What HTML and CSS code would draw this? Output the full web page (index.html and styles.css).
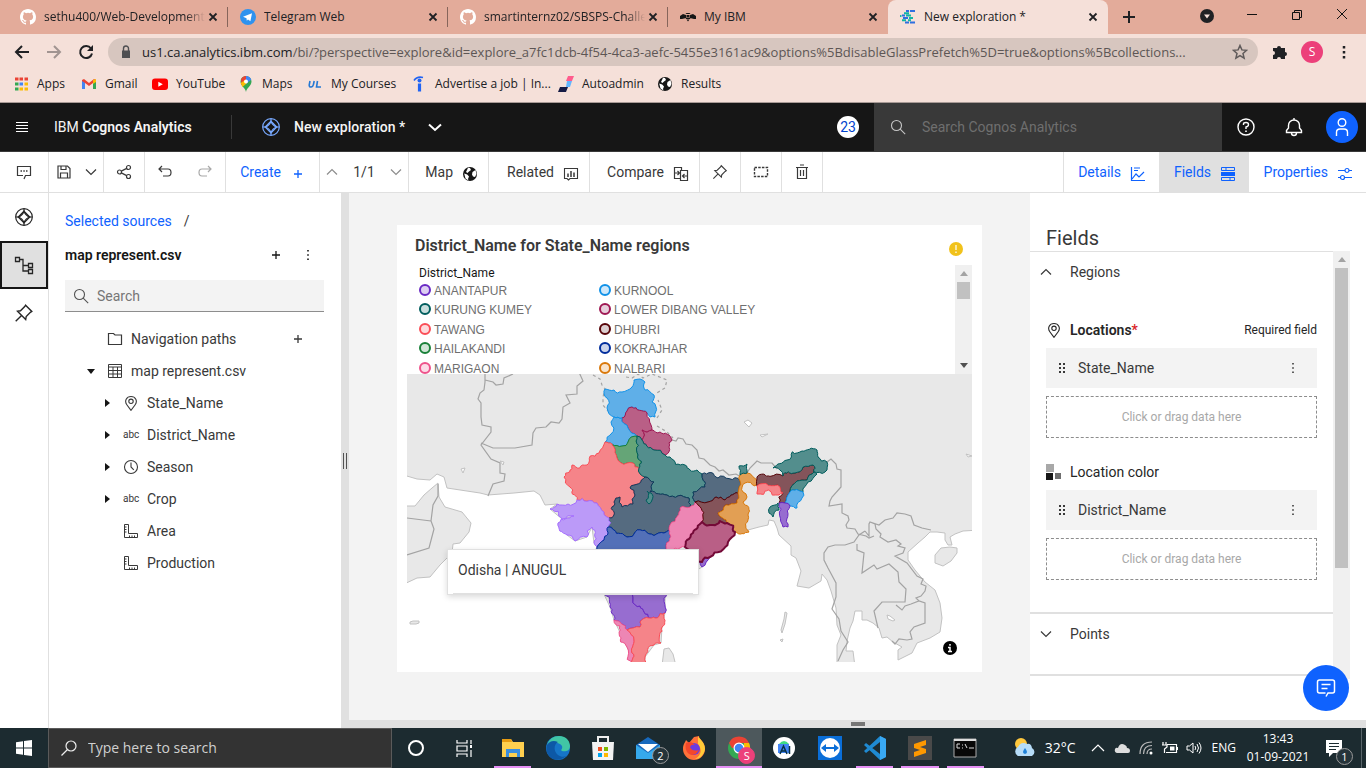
FILE: index.html
```html
<!DOCTYPE html>
<html lang="en">
<head>
<meta charset="utf-8">
<title>New exploration *</title>
<link rel="stylesheet" href="styles.css">
<script src="map.js" defer></script>
</head>
<body>
<svg class="defs" aria-hidden="true">
  <symbol id="x" viewBox="0 0 16 16"><path d="M4.5 4.5l7 7M11.5 4.5l-7 7" stroke="currentColor" stroke-width="1.8"/></symbol>
  <symbol id="github" viewBox="0 0 16 16"><path fill="#fff" d="M8 0C3.58 0 0 3.58 0 8c0 3.54 2.29 6.53 5.47 7.59.4.07.55-.17.55-.38 0-.19-.01-.82-.01-1.49-2.01.37-2.53-.49-2.69-.94-.09-.23-.48-.94-.82-1.13-.28-.15-.68-.52-.01-.53.63-.01 1.08.58 1.23.82.72 1.21 1.87.87 2.33.66.07-.52.28-.87.51-1.07-1.78-.2-3.64-.89-3.64-3.95 0-.87.31-1.59.82-2.15-.08-.2-.36-1.02.08-2.12 0 0 .67-.21 2.2.82a7.4 7.4 0 0 1 4 0c1.53-1.04 2.2-.82 2.2-.82.44 1.1.16 1.92.08 2.12.51.56.82 1.27.82 2.15 0 3.07-1.87 3.75-3.65 3.95.29.25.54.73.54 1.48 0 1.07-.01 1.93-.01 2.2 0 .21.15.46.55.38A8 8 0 0 0 16 8c0-4.42-3.58-8-8-8z"/></symbol>
  <symbol id="compass" viewBox="0 0 20 20"><g fill="none" stroke="currentColor" stroke-width="1.2"><circle cx="10" cy="10" r="8.3"/><path d="M10 4.200Q11.500 8.500 15.800 10 11.500 11.500 10 15.800 8.500 11.500 4.200 10 8.500 8.500 10 4.200z"/><path d="M10 1.700v2.500M10 15.800v2.500M1.700 10h2.500M15.800 10h2.500M10 4.200L15.800 10 10 15.800 4.200 10z"/></g></symbol>
  <symbol id="down" viewBox="0 0 16 16"><path d="M3 5.500l5 5 5-5" fill="none" stroke="currentColor" stroke-width="1.2"/></symbol>
  <symbol id="up" viewBox="0 0 16 16"><path d="M3 10.500l5-5 5 5" fill="none" stroke="currentColor" stroke-width="1.2"/></symbol>
  <symbol id="plus" viewBox="0 0 16 16"><path d="M8 4v8M4 8h8" stroke="currentColor" stroke-width="1.3"/></symbol>
  <symbol id="dots" viewBox="0 0 16 16"><path d="M7.2 3h1.6v1.6H7.2zM7.2 7.2h1.6v1.6H7.2zM7.2 11.4h1.6V13H7.2z" fill="currentColor"/></symbol>
  <symbol id="search" viewBox="0 0 16 16"><g fill="none" stroke="currentColor" stroke-width="1.1"><circle cx="6.5" cy="6.5" r="5"/><path d="M10.2 10.2l5 5"/></g></symbol>
  <symbol id="pin" viewBox="0 0 20 20"><path d="M11.6 2.2l6.2 6.2-1.4.9-4.2 4.2-.5 3L3.500 8.300l3-.5 4.200-4.200zM7.300 12.700l-5.600 5.600" fill="none" stroke="currentColor" stroke-width="1.4"/></symbol>
  <symbol id="marker" viewBox="0 0 16 16"><g fill="none" stroke="currentColor" stroke-width="1.1"><path d="M8 15.300L4 10C1 6 3.500 1.500 8 1.500S15 6 12 10z"/><circle cx="8" cy="6.300" r="2.200"/></g></symbol>
  <symbol id="grip" viewBox="0 0 16 16"><path d="M5 3h2v2H5zM9 3h2v2H9zM5 7h2v2H5zM9 7h2v2H9zM5 11h2v2H5zM9 11h2v2H9z" fill="currentColor"/></symbol>
  <symbol id="ruler" viewBox="0 0 16 16"><g fill="none" stroke="currentColor"><path d="M1.500 1.500h4v9h9v4h-13z"/><path d="M1.500 4h2M1.500 6.500h2M1.500 9h2M6.500 14.500v-2M9 14.500v-2M11.500 14.500v-2"/></g></symbol>
  <symbol id="globe" viewBox="0 0 16 16"><circle cx="8" cy="8" r="7" fill="#161616"/><path d="M2.200 7.500l3 1 1.800 2-1 2.500.5 1.500-3-2zM6 1.800l2 .2 1 2-2 1.500L5.500 7 4 6l1-2zM10.500 6l3-2 1 4-1.500 3-2-.5-1-2z" fill="#fff"/></symbol>
</svg>

<header class="chrome">
  <nav class="tabs" aria-label="Browser tabs">
    <div class="tab"><svg class="i16"><use href="#github"/></svg><span class="tab-name fade">sethu400/Web-Development-</span><button aria-label="Close tab"><svg class="i16"><use href="#x"/></svg></button></div>
    <div class="tab"><svg class="i16" viewBox="0 0 16 16"><circle cx="8" cy="8" r="8" fill="#2e92ef"/><path d="M3 7.800L12 4.200l-1.600 8-2.400-1.800L6.800 11.700 6.500 9.200z" fill="#fff"/></svg><span class="tab-name">Telegram Web</span><button aria-label="Close tab"><svg class="i16"><use href="#x"/></svg></button></div>
    <div class="tab"><svg class="i16"><use href="#github"/></svg><span class="tab-name fade">smartinternz02/SBSPS-Challe</span><button aria-label="Close tab"><svg class="i16"><use href="#x"/></svg></button></div>
    <div class="tab last"><svg class="i16" viewBox="0 0 16 16"><path d="M5.500 4l1 1h3l1-1M0 7l3-2 3 1v3l-4 1H0zM16 7l-3-2-3 1v3l4 1h2zM6.500 6h3v2h-3zM6 8.500h4v1.500H6zM6.500 10.500h3L8 12.500z" fill="#161616"/></svg><span class="tab-name">My IBM</span><button aria-label="Close tab"><svg class="i16"><use href="#x"/></svg></button></div>
    <div class="tab active"><svg class="i16" viewBox="0 0 16 16"><path d="M6 2h3M10 2h5M2 6.500h3M3 9h5M5 13.500h4M10 13.500h5" stroke="#2f6fe0" stroke-width="2"/><path d="M4 4.200h5M6 6.500h5M9 9h4M2 11.300h4M8 11.300h3M0 7h1.500" stroke="#12b5a5" stroke-width="2"/></svg><span class="tab-name">New exploration *</span><button aria-label="Close tab"><svg class="i16"><use href="#x"/></svg></button></div>
    <button class="new-tab" aria-label="New tab"><svg class="i16" viewBox="0 0 16 16"><path d="M8 2v12M2 8h12" stroke="currentColor" stroke-width="2"/></svg></button>
    <div class="window-controls">
      <button aria-label="Search tabs"><svg class="i16" viewBox="0 0 16 16"><circle cx="8" cy="9" r="7" fill="#202124"/><path d="M5 7.500h6L8 11.500z" fill="#f5e0d9"/></svg></button>
      <button aria-label="Minimize"><svg class="i16" viewBox="0 0 16 16"><path d="M3 7.500h10" stroke="#111"/></svg></button>
      <button aria-label="Restore"><svg class="i16" viewBox="0 0 16 16"><path d="M3.500 5.500h7v7h-7zM5.500 5V3.500h7v7H11" fill="none" stroke="#111"/></svg></button>
      <button aria-label="Close"><svg class="i16" viewBox="0 0 16 16"><path d="M3 2l10 10M13 2L3 12" stroke="#111"/></svg></button>
    </div>
  </nav>
  <div class="address-row">
    <button aria-label="Back"><svg class="i16" viewBox="0 0 16 16"><path d="M15 8H2M8 2L2 8l6 6" fill="none" stroke="#202124" stroke-width="2"/></svg></button>
    <button aria-label="Forward"><svg class="i16" viewBox="0 0 16 16"><path d="M1 8h13M8 2l6 6-6 6" fill="none" stroke="#a19491" stroke-width="2"/></svg></button>
    <button aria-label="Reload"><svg class="i16" viewBox="0 0 16 16"><path d="M13 4.500A6 6 0 1 0 14 9.500" fill="none" stroke="#202124" stroke-width="2"/><path d="M15 1v6H9z" fill="#202124"/></svg></button>
    <div class="omnibox">
      <svg class="i16" viewBox="0 0 16 16"><path d="M4 6.500h8V14H4z" fill="#4f4f52"/><path d="M5.500 7V4.500a2.500 2.500 0 0 1 5 0V7" fill="none" stroke="#4f4f52" stroke-width="1.400"/></svg>
      <div class="url"><b>us1.ca.analytics.ibm.com</b>/bi/?perspective=explore&amp;id=explore_a7fc1dcb-4f54-4ca3-aefc-5455e3161ac9&amp;options%5BdisableGlassPrefetch%5D=true&amp;options%5Bcollections...</div>
      <button aria-label="Bookmark"><svg class="i16" viewBox="0 0 16 16"><path d="M8 1.500l1.900 4.400 4.700.4-3.600 3.100 1.100 4.700L8 11.600l-4.100 2.500L5 9.400 1.400 6.300l4.700-.4z" fill="none" stroke="#5f5a5a" stroke-width="1.500"/></svg></button>
    </div>
    <button aria-label="Extensions"><svg class="i16" viewBox="0 0 16 16"><path d="M1 4h4a2 2 0 1 1 4 0h4v4a2 2 0 1 1 0 4v3H9a2 2 0 1 0-4 0H1v-4a2 2 0 1 0 0-4z" fill="#202124"/></svg></button>
    <button class="profile" aria-label="Profile">S</button>
    <button aria-label="Menu"><svg class="i16" viewBox="0 0 16 16"><path d="M8 2v2.500M8 7v2.500M8 12v2.500" stroke="#202124" stroke-width="2.500"/></svg></button>
  </div>
  <nav class="bookmarks" aria-label="Bookmarks">
    <a href="#"><svg class="i16" viewBox="0 0 16 16"><path d="M2 3h3.500M6.500 3H10M11.500 3H15" stroke="#ea4335" stroke-width="3"/><path d="M2 8h3.500M2 13h3.500" stroke="#34a853" stroke-width="3"/><path d="M6.500 8H10" stroke="#4285f4" stroke-width="3"/><path d="M11.500 8H15M6.500 13H10M11.500 13H15" stroke="#fbbc04" stroke-width="3"/></svg>Apps</a>
    <a href="#"><svg class="i16" viewBox="0 0 16 16"><path d="M1 4v9h3V7l4 3 4-3v6h3V4l-2-1-5 4-5-4z" fill="#ea4335"/><path d="M1 5v8h3V7z" fill="#4285f4"/><path d="M12 7v6h3V5z" fill="#34a853"/><path d="M12 4l3-1v3l-3 2z" fill="#fbbc04"/></svg>Gmail</a>
    <a href="#"><svg class="i16" viewBox="0 0 16 16"><rect y="2.500" width="16" height="11.500" rx="3" fill="#f00"/><path d="M6.300 5.700v5l4.500-2.500z" fill="#fff"/></svg>YouTube</a>
    <a href="#"><svg class="i16" viewBox="0 0 16 16"><path d="M8 16C7.500 12 2.500 10 2.500 5.500a5.500 5.500 0 0 1 11 0C13.500 10 8.500 12 8 16z" fill="#34a853"/><path d="M3 3.500A5.500 5.500 0 0 1 8 0v5L3.500 9z" fill="#ea4335"/><path d="M8 0a5.500 5.500 0 0 1 5.200 3.800L8 8z" fill="#4285f4"/><path d="M2.700 7L7 4l2 3-4.500 4z" fill="#fbbc04"/><circle cx="8" cy="5.500" r="2" fill="#fff"/></svg>Maps</a>
    <a href="#"><svg class="i16" viewBox="0 0 16 16"><path d="M3 5L2.200 9q0 2.300 2 2 1.800-.4 2.200-2.400L7.200 5M10.500 5L9.500 11h4.500" fill="none" stroke="#2478d4" stroke-width="1.600"/></svg>My Courses</a>
    <a href="#"><svg class="i16" viewBox="0 0 16 16"><path d="M3 4.500Q6 0 12 1.500" fill="none" stroke="#2164f3" stroke-width="1.500"/><circle cx="8.500" cy="4.500" r="2" fill="#2164f3"/><path d="M8.500 7.500v8" stroke="#2164f3" stroke-width="3.200"/></svg>Advertise a job | In...</a>
    <a href="#"><svg class="i16" viewBox="0 0 16 16"><path d="M10 0h6l-2 5H8z" fill="#ff5c8d"/><path d="M9 5h5l-2 6H8z" fill="#62b5ff"/><path d="M2 11h8l-2 5H0z" fill="#151b45"/></svg>Autoadmin</a>
    <a href="#"><svg class="i16"><use href="#globe"/></svg>Results</a>
  </nav>
</header>

<div class="app-header">
  <button class="menu" aria-label="Open menu"><svg class="i16" viewBox="0 0 16 16"><path d="M2 3.500h12M2 6.500h12M2 9.500h12M2 12.500h12" stroke="#fff"/></svg></button>
  <div class="product">IBM <b>Cognos Analytics</b></div>
  <div class="doc"><svg class="i20 doc-icon"><use href="#compass"/></svg><b>New exploration *</b><button aria-label="Switch asset"><svg class="i20" viewBox="0 0 20 20"><path d="M4 7.500l6 5.500 6-5.500" fill="none" stroke="#fff" stroke-width="2"/></svg></button></div>
  <span class="count">23</span>
  <label class="global-search"><svg class="i16"><use href="#search"/></svg><input type="text" aria-label="Search Cognos Analytics" placeholder="Search Cognos Analytics"></label>
  <button class="head-btn" aria-label="Help"><svg class="i20" viewBox="0 0 20 20"><g fill="none" stroke="#fff" stroke-width="1.400"><circle cx="10" cy="10" r="8"/><path d="M7.500 8V7q0-1.500 2.500-1.500T12.500 7.500 10 10v2"/><path d="M10 13.500v1.500" stroke-width="1.600"/></g></svg></button>
  <button class="head-btn" aria-label="Notifications"><svg class="i20" viewBox="0 0 20 20"><path d="M10 1v2M2.500 15.500v-2l2-2.500V8.500a5.500 5.500 0 0 1 11 0V11l2 2.500v2zM7.500 16a2.500 2.500 0 0 0 5 0" fill="none" stroke="#fff" stroke-width="1.400"/></svg></button>
  <button class="avatar" aria-label="Personal menu"><svg class="i20" viewBox="0 0 20 20"><g fill="none" stroke="#fff" stroke-width="1.400"><circle cx="10" cy="5.500" r="3.800"/><path d="M4.500 19v-3.500q0-3.500 3.500-3.500h4q3.500 0 3.500 3.500V19"/></g></svg></button>
</div>

<div class="toolbar">
  <button class="w48" aria-label="Assistant"><svg class="i16" viewBox="0 0 16 16"><path d="M8 15l1.500-3.500H14.500v-9h-13v9H7" fill="none" stroke="currentColor" stroke-width="1.200"/><path d="M4.500 7h1.500M7.300 7h1.500M10 7h1.500" stroke="currentColor" stroke-width="1.500"/></svg></button>
  <button class="w55" aria-label="Save"><svg class="i16" viewBox="0 0 16 16"><path d="M2 2h9.500L14 4.500V14H2zM5 2v3.500h5V2M4.500 14V9h7v5" fill="none" stroke="currentColor" stroke-width="1.200"/></svg><svg class="i16"><use href="#down"/></svg></button>
  <button class="w41" aria-label="Share"><svg class="i16" viewBox="0 0 16 16"><g fill="none" stroke="currentColor" stroke-width="1.200"><circle cx="3.500" cy="8" r="2"/><circle cx="12.500" cy="3.500" r="2"/><circle cx="12.500" cy="12.500" r="2"/><path d="M5.300 7.100l5.400-2.700M5.300 8.900l5.400 2.700"/></g></svg></button>
  <div class="w81 pair"><button aria-label="Undo"><svg class="i16" viewBox="0 0 16 16"><path d="M5 2L2 5l3 3M2 5h9q3 0 3 3.500T11 12H6" fill="none" stroke="currentColor" stroke-width="1.200"/></svg></button><button aria-label="Redo" disabled><svg class="i16" viewBox="0 0 16 16"><path d="M11 2l3 3-3 3M14 5H5Q2 5 2 8.500T5 12h5" fill="none" stroke="currentColor" stroke-width="1.200"/></svg></button></div>
  <button class="w94 text blue">Create<svg class="i16 low"><use href="#plus"/></svg></button>
  <div class="w89 pager"><button aria-label="Previous"><svg class="i16"><use href="#up"/></svg></button><span>1/1</span><button aria-label="Next"><svg class="i16"><use href="#down"/></svg></button></div>
  <button class="w80 text">Map<svg class="i16 low"><use href="#globe"/></svg></button>
  <button class="w101 text">Related<svg class="i16 low" viewBox="0 0 16 16"><path d="M1.500 2.500h13v10H7L5.500 14 4 12.500H1.500z" fill="none" stroke="currentColor" stroke-width="1.100"/><path d="M5 11V7.500M8 11V5M11 11V6.500" stroke="currentColor" stroke-width="1.500"/></svg></button>
  <button class="w110 text">Compare<svg class="i16 low" viewBox="0 0 16 16"><path d="M8.500 4V1.500h-7v11h6M7.500 4.500h7v10h-7z" fill="none" stroke="currentColor" stroke-width="1.200"/><path d="M2 7h4M4.500 5L6.500 7l-2 2M14 10h-4M11.500 8l-2 2 2 2" fill="none" stroke="currentColor" stroke-width="1.200"/></svg></button>
  <button class="w41" aria-label="Pin"><svg class="i16"><use href="#pin"/></svg></button>
  <button class="w41" aria-label="Select area"><svg class="i16" viewBox="0 0 16 16"><path d="M1.500 3.500h13v9h-13z" fill="none" stroke="currentColor" stroke-width="1.400" stroke-dasharray="2.500 1.200"/></svg></button>
  <button class="w41" aria-label="Delete"><svg class="i16" viewBox="0 0 16 16"><path d="M2 3.500h12M3.500 3.500v11h9v-11M6 1h4M6.500 6v6M9.500 6v6" fill="none" stroke="currentColor" stroke-width="1.200"/></svg></button>
  <div class="spacer"></div>
  <button class="w96 text blue">Details<svg class="i16 low" viewBox="0 0 16 16"><path d="M1.500 1v13.500H15M4 2h6M4 4.500h4M2 13l4-5 3 3 5-5" fill="none" stroke="currentColor" stroke-width="1.200"/></svg></button>
  <button class="w90 text blue on">Fields<svg class="i16 low" viewBox="0 0 16 16"><path d="M1.500 1.500h13v3h-13zM1.500 11.500h13v3h-13zM6 1.500v3M10 11.500v3" fill="none" stroke="currentColor"/><path d="M1 6h14v4H1z" fill="currentColor"/></svg></button>
  <button class="w117 text blue">Properties<svg class="i16 low" viewBox="0 0 16 16"><g fill="none" stroke="currentColor" stroke-width="1.200"><circle cx="10" cy="4.500" r="2"/><circle cx="5.500" cy="11.500" r="2"/><path d="M1 4.500h7M12 4.500h3M1 11.500h2.500M7.500 11.500H15"/></g></svg></button>
</div>

<main class="workspace">
  <nav class="rail" aria-label="Panels">
    <button aria-label="Explore"><svg class="i20"><use href="#compass"/></svg></button>
    <button class="selected" aria-label="Sources"><svg class="i20" viewBox="0 0 20 20"><path d="M1.500 2.500h4v4h-4zM5.500 4.500H9V16h5M9 10.500h5M14.500 8.500h4v4h-4zM14.500 14.500h4v4h-4z" fill="none" stroke="currentColor" stroke-width="1.300"/></svg></button>
    <button aria-label="Pinned"><svg class="i20"><use href="#pin"/></svg></button>
  </nav>
  <aside class="sources">
    <div class="crumbs"><a href="#">Selected sources</a><span>/</span></div>
    <div class="source-head"><h2>map represent.csv</h2><button aria-label="Add source"><svg class="i16"><use href="#plus"/></svg></button><button aria-label="More"><svg class="i16"><use href="#dots"/></svg></button></div>
    <label class="source-search"><svg class="i16"><use href="#search"/></svg><input type="text" aria-label="Search" placeholder="Search"></label>
    <ul class="tree">
      <li><i class="caret"></i><svg class="i16" viewBox="0 0 16 16"><path d="M1.500 2.500h5L8 4h6.500v9.500h-13z" fill="none" stroke="currentColor" stroke-width="1.200"/></svg><span>Navigation paths</span><button aria-label="Add path"><svg class="i16"><use href="#plus"/></svg></button></li>
      <li><i class="caret open"></i><svg class="i16" viewBox="0 0 16 16"><path d="M1.500 1.500h13v13h-13zM1.500 4h13M1.500 7.500h13M1.500 11h13M6 4v10.500M10.500 4v10.500" fill="none" stroke="currentColor"/></svg><span>map represent.csv</span></li>
      <li class="child"><i class="caret shut"></i><svg class="i16"><use href="#marker"/></svg><span>State_Name</span></li>
      <li class="child"><i class="caret shut"></i><em>abc</em><span>District_Name</span></li>
      <li class="child"><i class="caret shut"></i><svg class="i16" viewBox="0 0 16 16"><g fill="none" stroke="currentColor" stroke-width="1.100"><circle cx="8" cy="8" r="6.500"/><path d="M8 3.500V8l2.800 2.800"/></g></svg><span>Season</span></li>
      <li class="child"><i class="caret shut"></i><em>abc</em><span>Crop</span></li>
      <li class="child"><i class="caret"></i><svg class="i16"><use href="#ruler"/></svg><span>Area</span></li>
      <li class="child"><i class="caret"></i><svg class="i16"><use href="#ruler"/></svg><span>Production</span></li>
    </ul>
  </aside>
  <div class="splitter"><i></i></div>
  <section class="canvas">
    <article class="card">
      <div class="card-head"><h1>District_Name for State_Name regions</h1><svg class="i16" viewBox="0 0 16 16"><circle cx="8" cy="8" r="7" fill="#f1c21b"/><path d="M8 4v5M8 10.500v1.500" stroke="#fff" stroke-width="1.200"/></svg></div>
      <div class="legend">
        <div class="legend-body">
          <h3>District_Name</h3>
          <ul>
            <li><i class="c-purple"></i>ANANTAPUR</li><li><i class="c-sky"></i>KURNOOL</li>
            <li><i class="c-teal"></i>KURUNG KUMEY</li><li><i class="c-magenta"></i>LOWER DIBANG VALLEY</li>
            <li><i class="c-coral"></i>TAWANG</li><li><i class="c-maroon"></i>DHUBRI</li>
            <li><i class="c-green"></i>HAILAKANDI</li><li><i class="c-royal"></i>KOKRAJHAR</li>
            <li><i class="c-pink"></i>MARIGAON</li><li><i class="c-orange"></i>NALBARI</li>
          </ul>
        </div>
        <div class="bar"><i class="tri up"></i><i class="thumb small"></i><i class="tri down"></i></div>
      </div>
      <div class="map-wrap">
        <svg class="map" viewBox="407 374 565 288" role="img" aria-label="Map of State_Name regions coloured by District_Name">
          <g fill="#e8e8e8" stroke="#c2c2c2">
            <path d="M400 368H980V530l-17 1-8 3-5 3 2 8h-4l-3-5v-7l-8-1h-7l-5 5-7 6-10 9v8l7 10 10 12 10 8 5 13 2 15-2 14-10 6-13 5-5 10-14 7v-10l4-3-9-5-6-5-5 1-3-10-6-5-6-3h-5v-9h-7l-2 10-3 7-3 13-1 10h7l2 16h-18v-22l4-10-4-10-1-17-5-17-4-11-5-6-1 7-12 7-12-2 4-15-5-13-5-3v-9l-12-11-2-7-3-7-5-1-1 5-9 2-11 3h-16L728 542L710 557L702 567L665 590L665 613L662 627L661 643L654 645L645 657V668H636L627 647L614 620L610 607L602 590L593 555L597 547L594 543L592 527L587 537L575 541L567 535L558 523L574 516L562 519L550 509L557 504L545 505L540 495L534 491L514 493L488 495L480 493L447 488L444 477L437 474L430 480L417 479L400 474z"/>
            <path d="M400 506h15l9-11 8-7 6-5 1 14 6 10 17 5 9 11-2 9-9 11-7 1-1 9-12 12-10 12-13 1-17 8z"/>
            <path d="M664 649l5-1 4 6 3 12h-14zM935 555l6-7 9-1 7 1v5l-6 8-8 5-8-3zM410 622l3-1h6v2l-3 1h-6zM785 612l2 1-2 11-3 9-1-3 3-11zM780 640l3-1-1 3z"/>
            <path fill="#fff" d="M744 422l4-2 4 3-3 4zM760 435l8-1-6 3zM966 454l6 2-4 1zM461 469l4-1-2 5zM500 461l4 1-1 3zM887 615l3 1 5 4-2 1-5-2z"/>
          </g>
          <g fill="none" stroke="#a3a3a3" stroke-width="1.200">
            <path d="M485 374v8l-1 8-4 3-2 6 3 4v14l1 8 9 2v5l-10 13 10 14 9 4v10l5 1-1 7-11 3-5 12M485 380l8 2 3 3 7-1 1-6 9-4M481 443l12 5h22l17-3 1-12 3-5 10-1 5-5 8 1 3-4 1-12 7-4-4-8 11-1v-8l6-5-5-11"/>
            <path d="M438 484v12l-5 9-2 16 3 8-5 19-22 7M407 518l24 3"/>
            <path d="M672 440l4 1 2-3 5 1 3 5 6 1 5 5 2 8 5 1 6 6 5 2 4 4 4-1 6 5 7-1 5 3 4-1M747 473l3-5 7-7 4 2h11l5 6M827 462l4-3 5 5 1 5 4 1v17l-9 10-2 4-1 5 13-2v9l6 3 1 4-3 5 1 3 8 1 3 5 8 2 3 2 5-2M865 531l-6 4-5 7-9 3h-10l-7 2-4 6v7l4 8 8 15v14l-4 12 7 10 2 12 7 11-5 8-5 11M857 544v6l7 3-2 20 12-8 3 4 12-5 9 8 1 10 7 7-1 13h-23l-8 9 4 17M865 531l4 5v-12l1-2 9 3 6-5 8-2 4-5 8 1 6 2 3 9 8 3 9 2M870 522l5 2 1 5 5 5-1 3 8 5 8-2 5 4-3 2 7 2-2 5-8 3 12 7 10 13 6 3-2 5 5 2-1 5-4 5-5 2 3 3M911 604l-6 2-3 4-6-5M911 604l8-3 6 2v20l-11 4-4 5 2 7-5 1-8-1-4 5-3-3"/>
            <path d="M593 375l7 4 2 6 3 4-2 8v8l5 6M626 377l6 1 6-4 5 4 9-4 5 2 10 4-2 8-10 6M657 418l5-8-4-10M657 426l10 6 6 6" stroke-dasharray="3 3"/>
          </g>
          <g id="states" stroke-linejoin="round"></g>
        </svg>
        <div class="tip"><span>Odisha | ANUGUL</span></div>
        <button class="info" aria-label="Map information"><svg class="i16" viewBox="0 0 16 16"><circle cx="8" cy="8" r="7"/><path d="M8 4v1.800M6 7.500h2v4M6 11.500h4" stroke="#fff" stroke-width="1.500" fill="none"/></svg></button>
      </div>
    </article>
  </section>
  <aside class="fields">
    <h2>Fields</h2>
    <div class="fields-scroll">
      <div class="fields-body">
        <section class="group">
          <button class="fold"><svg class="i16"><use href="#up"/></svg>Regions</button>
          <div class="slot-head gap-above"><svg class="i16"><use href="#marker"/></svg><b>Locations<sup>*</sup></b><small>Required field</small></div>
          <div class="slot"><svg class="i16"><use href="#grip"/></svg>State_Name<button aria-label="State_Name options"><svg class="i16"><use href="#dots"/></svg></button></div>
          <button class="drop">Click or drag data here</button>
          <div class="slot-head"><svg class="i16" viewBox="0 0 16 16"><path d="M0 0h8v8H0z" fill="#a8a8a8"/><path d="M0 9h7v7H0z" fill="#161616"/><path d="M9 9h6v6H9z" fill="#6f6f6f"/></svg>Location color</div>
          <div class="slot"><svg class="i16"><use href="#grip"/></svg>District_Name<button aria-label="District_Name options"><svg class="i16"><use href="#dots"/></svg></button></div>
          <button class="drop">Click or drag data here</button>
        </section>
        <section class="group short"><button class="fold"><svg class="i16"><use href="#down"/></svg>Points</button></section>
      </div>
      <div class="bar"><i class="tri up"></i><i class="thumb tall"></i></div>
    </div>
    <button class="chat" aria-label="Chat"><svg class="i20" viewBox="0 0 20 20"><path d="M10 18.500l2-3.500h4.500q2 0 2-2V4q0-2-2-2h-13q-2 0-2 2v9q0 2 2 2h6M5.500 6.500h9M5.500 10.500h6" fill="none" stroke="#fff" stroke-width="1.500"/></svg></button>
  </aside>
  <div class="bottom-split"><i></i></div>
</main>

<footer class="taskbar">
  <button class="start" aria-label="Start"><svg class="i16" viewBox="0 0 16 16"><path d="M0 2.200l7-1v6.300H0zM8 1l8-1v7.500H8zM0 8.500h7v6.300l-7-1zM8 8.500h8V16l-8-1z" fill="#fff"/></svg></button>
  <label class="task-search"><svg class="i16" viewBox="0 0 16 16"><g fill="none" stroke="#eee" stroke-width="1.200"><circle cx="10" cy="6" r="5"/><path d="M6.500 9.500L.5 15.500"/></g></svg><input type="text" aria-label="Type here to search" placeholder="Type here to search"></label>
  <button class="sys" aria-label="Cortana"><svg class="i20" viewBox="0 0 20 20"><circle cx="10" cy="10" r="7" fill="none" stroke="#fff" stroke-width="2"/></svg></button>
  <button class="sys" aria-label="Task view"><svg class="i20" viewBox="0 0 20 20"><path d="M3 2v3h10V2M3 8h10v5H3zM3 19v-3h10v3M17 2v4M17 12v7" fill="none" stroke="#fff" stroke-width="1.200"/><path d="M16 7h2v3h-2z" fill="#fff"/></svg></button>
  <div class="apps">
    <button class="run" aria-label="File Explorer"><svg class="i24" viewBox="0 0 24 24"><path d="M1 3h9l2 3h11v15H1z" fill="#ffd04f"/><path d="M1 3h9l1 3H1z" fill="#e89c12"/><path d="M5 13h14v8h-3v-4H8v4H5z" fill="#3b8ede"/></svg></button>
    <button aria-label="Edge"><svg class="i24" viewBox="0 0 24 24"><circle cx="12" cy="12" r="12" fill="#1675c8"/><path d="M1 9Q4 0 13 0c8 0 11 6 11 10 0 5-5 6-8 5-2-1 1-2 0-5C14 6 5 5 1 9z" fill="#41c6a5"/><path d="M1 9Q5 3 12 6c-4 2-5 9 0 13 4 3 8 2 10-1-5 7-14 7-18 3Q-1 16 1 9z" fill="#0d58a6"/></svg></button>
    <button aria-label="Store"><svg class="i24" viewBox="0 0 24 24"><path d="M7 6V1h10v5" fill="none" stroke="#eee" stroke-width="2"/><path d="M1 6h22l-1 18H2z" fill="#f3f3f3"/><path d="M7 11h4v4H7z" fill="#f25022"/><path d="M13 11h4v4h-4z" fill="#7fba00"/><path d="M7 17h4v4H7z" fill="#00a4ef"/><path d="M13 17h4v4h-4z" fill="#ffb900"/></svg></button>
    <button aria-label="Mail"><svg class="i24" viewBox="0 0 24 24"><path d="M0 9l12-8 12 8v14H0z" fill="#1769bd"/><path d="M2 8h20L12 16z" fill="#fff"/><path d="M0 9l12 8 12-8v14H0z" fill="#36a9ec"/></svg><span class="badge">2</span></button>
    <button aria-label="Firefox"><svg class="i24" viewBox="0 0 24 24"><path d="M12 1l5-1c0 4 6 5 6 13a11 11 0 0 1-22 0c0-5 2-6 3-9l3 3z" fill="#ff7139"/><path d="M16 0c1 3 7 6 7 13-1 6-5 10-10 10 7-4 7-10 3-15z" fill="#ffcb38"/><circle cx="12" cy="13" r="6" fill="#6b3ce0"/><path d="M4 7q5-3 9 2-4-1-5 2 2 5 9 3-4 7-10 4-5-4-3-11z" fill="#f4472c"/></svg></button>
    <button class="run front" aria-label="Chrome"><svg class="i24" viewBox="0 0 24 24"><circle cx="12" cy="12" r="11" fill="#34a853"/><path d="M2 7a11 11 0 0 1 20 0H12z" fill="#ea4335"/><path d="M22 7a11 11 0 0 1-10 16l5-9V7z" fill="#fbbc04"/><path d="M2 7h12v5H5z" fill="#ea4335"/><circle cx="12" cy="12" r="5.500" fill="#fff"/><circle cx="12" cy="12" r="4.300" fill="#4285f4"/></svg><span class="badge rosy">S</span></button>
    <button aria-label="Android Studio"><svg class="i24" viewBox="0 0 24 24"><circle cx="12" cy="12" r="11" fill="#fff"/><path d="M6 8h11v9H6z" fill="#4285f4"/><path d="M7 8q5-6 10 0z" fill="#3ddc84"/><path d="M8 18l3.500-8 3.500 8M9.500 15h4M17.500 10v8" fill="none" stroke="#073042" stroke-width="1.500"/></svg></button>
    <button aria-label="TeamViewer"><svg class="i24" viewBox="0 0 24 24"><path d="M0 0h24v24H0z" fill="#0a6ed8"/><circle cx="12" cy="12" r="10" fill="#fff"/><path d="M3 12l5-4v3h8V8l5 4-5 4v-3H8v3z" fill="#0a6ed8"/></svg></button>
    <button class="run" aria-label="Visual Studio Code"><svg class="i24" viewBox="0 0 24 24"><path d="M17 0l6 3v18l-6 3L1 9l2-2 14 11V6L3 17l-2-2z" fill="#1f8ad2"/><path d="M17 0l6 3v18l-6 3z" fill="#39a9f4"/></svg></button>
    <button class="run" aria-label="Sublime Text"><svg class="i24" viewBox="0 0 24 24"><path d="M0 0h24v24H0z" fill="#494949"/><path d="M18 4v5l-6 2 6 2v4L6 21v-5l6-2-6-2V8z" fill="#ff9800"/></svg></button>
    <button class="run" aria-label="Command Prompt"><svg class="i24" viewBox="0 0 24 24"><path d="M1 3h22v18H1z" fill="#080808" stroke="#aaa"/><path d="M1 3h22v2H1z" fill="#ddd"/><path d="M7 8H4v4h3M9 9h1M9 12h1M12 8l2 4M16 12h5" fill="none" stroke="#ddd"/></svg></button>
  </div>
  <div class="tray">
    <svg class="i24" viewBox="0 0 24 24"><circle cx="8" cy="8" r="6" fill="#ffc83d"/><path d="M5 20a5 5 0 0 1 0-9q3-6 9-3 4-1 5 4a4.500 4.500 0 0 1 0 8z" fill="#b6dcf7"/><path d="M12 12q-4 5 0 6 4-1 0-6z" fill="#1c80d8"/></svg>
    <span class="temp">32°C</span>
    <svg class="i16" viewBox="0 0 16 16"><path d="M2 11l6-6 6 6" fill="none" stroke="#fff" stroke-width="1.200"/></svg>
    <svg class="i16" viewBox="0 0 16 16"><path d="M3 13q-3-1-2-4 1-2 3-1 2-6 7-3 2 1 2 3 3 0 3 3 0 2-2 2z" fill="#ddd"/></svg>
    <svg class="i16" viewBox="0 0 16 16"><path d="M2 14Q2 2 14 2M5.500 14Q5.500 5.500 14 5.500M9 14Q9 9 14 9" fill="none" stroke="#bbb" stroke-width="1.200"/><circle cx="13" cy="13" r="1.500" fill="#fff"/></svg>
    <svg class="i16" viewBox="0 0 16 16"><path d="M5 4.500h9.500v8H4M15.500 7v3M1 2v3M4 2v3M0 5h5v2L2.500 9v4" fill="none" stroke="#fff" stroke-width="1.200"/><path d="M8 6.500h4.500v4H8z" fill="#fff"/></svg>
    <svg class="i16" viewBox="0 0 16 16"><path d="M1 6v4h2.500L7 13V3L3.500 6zM9 6q1.500 2 0 4M11 4q3 4 0 8M13 2.500q4 5.500 0 11" fill="none" stroke="#fff"/></svg>
    <span class="lang">ENG</span>
    <span class="clock">13:43<br>01-09-2021</span>
    <button class="notice" aria-label="Notifications"><svg class="i20" viewBox="0 0 20 20"><path d="M2 2h16v13H9l-4 4v-4H2z" fill="#fff"/><path d="M5 5.500h10M5 8.500h10M5 11.500h7" stroke="#1c2b30" stroke-width="1.200"/></svg><span class="badge">1</span></button>
  </div>
</footer>
</body>
</html>
```

FILE: map.js
```js
// State outlines: colour class followed by the corner points of the border.
const STATES = [
  ["sky", "605,389 614,390 622,392 632,387 634,380 640,379 645,382 645,390 654,395 652,402 656,407 655,417 650,417 647,413 632,407 627,411 622,418 614,417 607,408 607,398"],
  ["magenta", "622,418 627,411 632,407 647,413 651,425 652,430 642,430 642,440 637,436 628,428"],
  ["sky", "622,418 628,428 637,436 628,442 622,446 612,444 605,442 611,434 611,422 614,417"],
  ["magenta", "642,430 652,430 660,432 672,440 669,447 665,455 654,450 642,440"],
  ["green", "637,436 638,455 639,468 633,463 627,463 614,447 612,444 622,446 628,442"],
  ["coral", "605,442 612,444 614,447 627,463 633,463 639,468 645,477 630,488 635,495 633,504 622,507 620,497 614,502 614,515 609,518 604,512 597,503 577,500 570,487 564,477 572,465 587,465 599,453"],
  ["teal", "637,436 642,440 654,450 665,455 670,457 685,465 697,470 702,474 705,487 693,492 695,502 690,507 689,498 667,495 650,492 654,482 645,477 639,468 638,455"],
  ["slate", "609,518 614,515 614,502 620,497 622,507 633,504 635,495 630,488 645,477 654,482 650,492 667,495 689,498 690,507 680,508 679,512 669,530 664,533 627,537 614,530 608,527"],
  ["teal", "647,491 651,493 652,500 649,504 646,500"],
  ["lavender", "577,500 597,503 604,512 609,518 608,527 604,540 597,547 594,543 592,527 587,537 575,541 567,535 558,523 574,516 562,519 550,509 557,504 568,504"],
  ["royal", "608,527 614,530 627,537 664,533 669,530 668,555 593,555 597,547 604,540"],
  ["pink", "680,508 690,507 695,502 703,517 702,522 693,533 687,540 685,547 668,555 669,530 679,512"],
  ["slate", "702,474 718,478 740,481 738,493 725,500 708,502 695,502 693,492 705,487"],
  ["brown", "695,502 708,502 725,500 738,493 737,503 718,513 727,523 713,525 702,522 703,517"],
  ["orange", "740,475 747,473 757,480 755,486 745,483 743,492 747,497 743,502 748,515 749,532 735,532 727,523 718,513 737,503 738,493 740,481"],
  ["teal", "739,466 747,464 747,473 740,475"],
  ["brown", "757,477 783,476 795,473 813,465 814,472 807,480 797,481 790,492 785,503 779,503 783,493 780,487 757,486"],
  ["teal", "773,468 787,460 802,451 817,450 818,457 827,462 825,472 814,472 813,465 795,473 783,476"],
  ["teal", "797,481 807,480 814,472 817,474 808,482 803,492 790,492"],
  ["sky", "790,492 803,492 802,498 797,508 790,506 785,503"],
  ["purple", "779,503 785,503 790,506 788,527 783,527"],
  ["teal", "770,507 778,503 779,510 773,517 769,513"],
  ["coral", "757,486 780,487 783,493 779,495 757,494"],
  ["purple", "700,562 710,557 702,567"],
  ["purple", "602,590 635,590 633,600 640,606 649,618 640,622 640,627 627,630 614,620 610,607"],
  ["purple", "635,590 665,590 665,613 649,618 640,606 633,600"],
  ["pink", "614,620 627,630 634,640 636,668 627,647"],
  ["coral", "627,630 640,627 640,622 649,618 665,613 662,627 661,643 654,645 645,657 645,668 636,668 634,640"],
  ["odisha", "702,522 713,525 727,523 735,532 728,542 710,557 702,562 690,556 685,547 687,540 693,533"]
];

// Repeatable value between -0.5 and 0.5 for a point.
function wobble(x, y) {
  const n = Math.sin(x * 12.9898 + y * 78.233) * 43758.5453;
  return n - Math.floor(n) - 0.5;
}

// Splits an edge into short uneven steps. An edge shared by two states gives the same line.
function border(a, b) {
  const flip = a[0] > b[0] || (a[0] === b[0] && a[1] > b[1]);
  const [p, q] = flip ? [b, a] : [a, b];
  const dx = q[0] - p[0], dy = q[1] - p[1];
  if (Math.hypot(dx, dy) < 3.5) return [a];
  const k = wobble(p[0] + q[0], p[1] + q[1]) * 0.5;
  const mid = [(p[0] + q[0]) / 2 - dy * k, (p[1] + q[1]) / 2 + dx * k];
  return [...border(a, mid), ...border(mid, b)];
}

const layer = document.getElementById("states");
for (const [kind, text] of STATES) {
  const pts = text.split(" ").map(p => p.split(",").map(Number));
  const line = pts.flatMap((p, i) => border(p, pts[(i + 1) % pts.length]));
  const path = document.createElementNS("http://www.w3.org/2000/svg", "path");
  path.setAttribute("class", kind);
  path.setAttribute("d", "M" + line.map(p => p[0].toFixed(1) + " " + p[1].toFixed(1)).join("L") + "z");
  layer.append(path);
}
```

FILE: styles.css
```css
* { box-sizing: border-box; }
body {
  margin: 0;
  height: 100vh;
  display: flex;
  flex-direction: column;
  overflow: hidden;
  font-family: Roboto, "Noto Sans", sans-serif;
  font-size: 14px;
  line-height: 20px;
  color: #393939;
  background: #fff;
}
button, input { font: inherit; color: inherit; border: 0; padding: 0; margin: 0; background: none; }
button { display: flex; align-items: center; justify-content: center; }
input { outline: 0; flex: 1; min-width: 0; }
h1, h2, h3, ul { margin: 0; padding: 0; font-weight: 400; }
ul { list-style: none; }
a { text-decoration: none; color: inherit; }
svg { display: block; flex: none; }
.defs { position: absolute; width: 0; height: 0; }
.i16 { width: 16px; height: 16px; }
.i20 { width: 20px; height: 20px; }
.i24 { width: 24px; height: 24px; }

/* Browser window */
.chrome { flex: none; background: #f5e0d9; border-bottom: 1px solid #a89a96; font: 12px/16px "Open Sans", "Noto Sans", sans-serif; color: #202124; }
.tabs { display: flex; height: 34px; padding-left: 8px; background: #e3ab9a; }
.tab { display: flex; align-items: center; width: 220px; padding: 0 7px 0 12px; position: relative; }
.tab::after { content: ""; position: absolute; right: 0; top: 7px; width: 1px; height: 20px; background: #86655b; }
.tab.last::after, .tab.active::after { display: none; }
.tab.active { background: #f5e0d9; border-radius: 8px 8px 0 0; }
.tab-name { flex: 1; min-width: 0; margin-left: 8px; overflow: hidden; white-space: nowrap; }
.fade { -webkit-mask-image: linear-gradient(90deg, #000 88%, transparent); mask-image: linear-gradient(90deg, #000 88%, transparent); }
.new-tab { width: 42px; }
.window-controls { display: flex; margin-left: auto; height: 30px; padding-right: 2px; }
.window-controls button { width: 45px; }
.address-row { display: flex; align-items: center; height: 34px; padding: 2px 6px 0; }
.address-row > button { width: 32px; }
.omnibox { flex: 1; display: flex; align-items: center; gap: 8px; min-width: 0; height: 28px; margin: 0 6px; padding: 0 10px; border-radius: 14px; background: #d7c6bf; }
.url { flex: 1; overflow: hidden; white-space: nowrap; font-size: 13px; line-height: 20px; color: #5d5655; }
.url b { font-weight: 400; color: #202124; }
.address-row .profile { width: 22px; height: 22px; margin: 0 5px; border-radius: 50%; background: #ec407a; color: #fff; }
.bookmarks { display: grid; grid-template-columns: 68px 71px 86px 69px 104px 147px 99px 1fr; align-items: center; height: 34px; padding: 0 0 2px 13px; }
.bookmarks a { display: flex; align-items: center; gap: 8px; white-space: nowrap; }

/* Application header */
.app-header { flex: none; display: flex; align-items: center; height: 49px; background: #161616; border-bottom: 1px solid #393939; color: #f4f4f4; }
.menu { width: 44px; }
.product { width: 188px; height: 24px; padding: 2px 0 0 10px; border-right: 1px solid #393939; white-space: nowrap; }
.app-header b { font-weight: 600; }
.doc { display: flex; align-items: center; gap: 13px; padding-left: 29px; white-space: nowrap; }
.doc .doc-icon { color: #78a9ff; }
.doc b { font-weight: 500; min-width: 118px; }
.count { width: 22px; height: 22px; margin-left: auto; border-radius: 50%; background: #fff; color: #0043ce; text-align: center; line-height: 22px; }
.global-search { display: flex; align-items: center; gap: 16px; align-self: stretch; width: 348px; margin-left: 15px; padding-left: 16px; background: #393939; color: #c6c6c6; }
.global-search input::placeholder { color: #6f6f6f; }
.head-btn { width: 48px; height: 48px; }
.avatar { width: 32px; height: 32px; margin: 0 8px; border-radius: 50%; background: #0f62fe; }
.toolbar { flex: none; display: flex; height: 41px; border-bottom: 1px solid #e0e0e0; white-space: nowrap; }
.toolbar > * { border-right: 1px solid #e0e0e0; display: flex; align-items: center; justify-content: center; flex: none; gap: 11px; }
.toolbar > .text { justify-content: flex-end; gap: 9px; padding-right: 10px; }
.toolbar > .blue { padding-right: 13px; }
.toolbar .low { margin-top: 3px; }
.toolbar .spacer { flex: 1; }
.toolbar > :last-child, .toolbar > .on, .toolbar > .w96 { border-right: 0; }
.w48 { width: 49px; }
.toolbar > .w55 { width: 55px; padding-left: 3px; }
.w41 { width: 41px; }
.w81 { width: 81px; }
.w94 { width: 94px; }
.w89 { width: 89px; }
.w80 { width: 80px; }
.w101 { width: 101px; }
.w110 { width: 110px; }
.w96 { width: 95px; }
.w90 { width: 90px; }
.w117 { width: 117px; }
.toolbar > .pair { gap: 24px; }
.toolbar > .pager { gap: 13px; }
.pair button:disabled { color: #a8a8a8; }
.pager button { color: #8d8d8d; }
.blue { color: #0f62fe; }
.on { background: #e0e0e0; }

/* Workspace */
.workspace { flex: 1; min-height: 0; display: grid; grid-template: minmax(0, 1fr) 8px / 49px 292px 8px minmax(0, 1fr) 336px; }
.rail { grid-row: 1 / 3; border-right: 1px solid #e0e0e0; }
.rail button { width: 48px; height: 48px; color: #262626; }
.rail .selected { background: #e0e0e0; border: 2px solid #161616; }
.sources { grid-row: 1 / 3; padding: 18px 17px 0 16px; }
.crumbs { display: flex; gap: 12px; }
.crumbs a { color: #0f62fe; }
.source-head { display: flex; align-items: center; margin-top: 14px; height: 20px; color: #161616; }
.source-head h2 { flex: 1; font-size: 14px; font-weight: 600; }
.source-head button { width: 32px; height: 20px; }
.source-search { display: flex; align-items: center; gap: 8px; height: 32px; margin-top: 15px; padding: 0 8px; background: #f3f3f3; border-bottom: 1px solid #8d8d8d; color: #525252; }
.source-search input::placeholder { color: #767676; }
.tree { margin-top: 11px; }
.tree li { display: flex; align-items: center; height: 32px; padding-left: 22px; white-space: nowrap; }
.tree .child { padding-left: 38px; }
.tree span { margin-left: 8px; }
.tree button { margin: 0 18px 0 auto; }
.tree em { width: 16px; font: 10px/16px Roboto, sans-serif; text-align: center; }
.caret { width: 8px; margin-right: 12px; border: 0 solid transparent; }
.caret.open { border-width: 5px 4px 0; border-top-color: #161616; }
.caret.shut { width: 5px; margin: 0 13px 0 2px; border-width: 4px 0 4px 5px; border-left-color: #161616; }
.splitter { grid-row: 1 / 3; display: flex; align-items: center; justify-content: center; background: #e0e0e0; }
.splitter i { width: 4px; height: 16px; border: solid #525252; border-width: 0 1px; }
.bottom-split { grid-column: 4 / 6; display: flex; align-items: center; justify-content: center; background: #e0e0e0; }
.bottom-split i { width: 14px; height: 4px; background: #767676; }
.canvas { background: #f3f3f3; padding: 32px 48px 0; }

.card { padding: 10px; background: #fff; }
.card-head { display: flex; justify-content: space-between; height: 30px; padding: 0 8px; }
.card-head h1 { font-size: 16px; line-height: 22px; font-weight: 600; }
.card-head .i16 { margin-top: 6px; }
.legend { display: flex; height: 109px; overflow: hidden; }
.legend-body { flex: 1; padding-left: 12px; }
.legend h3 { font-size: 12px; line-height: 16px; color: #161616; }
.legend ul { display: grid; grid-template-columns: 180px 180px; grid-auto-rows: 20px 19px; }
.legend li { display: flex; align-items: center; gap: 3px; padding-bottom: 1px; font: 12px/18px "Liberation Sans", sans-serif; color: #6f6f6f; white-space: nowrap; }
.legend li i { width: 12px; height: 12px; border-width: 2px; border-style: solid; border-radius: 50%; margin-bottom: 2px; }
.c-purple { border-color: #6929c4; background: #ddcff2; }
.c-sky { border-color: #1192e8; background: #cfe8fa; }
.c-teal { border-color: #005d5d; background: #c9dedd; }
.c-magenta { border-color: #9f1853; background: #e7cfdc; }
.c-coral { border-color: #fa4d56; background: #fedadc; }
.c-maroon { border-color: #570408; background: #dccfd0; }
.c-green { border-color: #198038; background: #d1e6d7; }
.c-royal { border-color: #002d9c; background: #ccd5eb; }
.c-pink { border-color: #ee538b; background: #fcdce8; }
.c-orange { border-color: #d9780a; background: #f8e4cd; }
.bar { display: flex; flex-direction: column; align-items: center; flex: none; width: 17px; background: #f0f0f0; }
.tri { width: 8px; margin: 6px 0; border: 0 solid transparent; }
.tri.up { border-width: 0 4px 5px; border-bottom-color: #a3a3a3; }
.tri.down { border-width: 5px 4px 0; border-top-color: #505050; margin-top: auto; }
.thumb { width: 13px; background: #c1c1c1; }
.small { height: 17px; }
.tall { height: 70%; }
.map-wrap { position: relative; }
.map { width: 100%; height: auto; }
.sky { fill: #5fafe8; stroke: #1192e8; }
.magenta { fill: #b95f86; stroke: #9f1853; }
.green { fill: #65a577; stroke: #198038; }
.teal { fill: #538e8d; stroke: #005d5d; }
.coral { fill: #f58489; stroke: #fa4d56; }
.slate { fill: #556b80; stroke: #12395c; }
.lavender { fill: #bb9af8; stroke: #a56eff; }
.royal { fill: #5370b8; stroke: #002d9c; }
.pink { fill: #ed86b4; stroke: #ee538b; }
.brown { fill: #84545a; stroke: #570408; }
.orange { fill: #e29f54; stroke: #d9780a; }
.purple { fill: #976dd0; stroke: #6929c4; }
.odisha { fill: #b95f86; stroke: #740937; stroke-width: 2px; }
.tip { position: absolute; left: 40px; top: 175px; width: 252px; height: 46px; padding: 10px 5px 1px; background: #fff; border: 1px solid #e0e0e0; box-shadow: 0 2px 6px rgba(0, 0, 0, .15); }
.tip span { display: block; height: 34px; padding-left: 5px; border-bottom: 1px solid #e0e0e0; }
.info { position: absolute; right: 14px; bottom: 6px; }

/* Fields panel */
.fields { display: flex; flex-direction: column; position: relative; background: #fff; min-height: 0; }
.fields h2 { height: 58px; padding: 32px 16px 0; font-size: 20px; line-height: 26px; }
.fields-scroll { display: flex; height: 428px; margin-right: 16px; }
.fields-body { flex: 1; border-top: 1px solid #e0e0e0; }
.group { height: 362px; padding: 0 16px; border-bottom: 2px solid #e0e0e0; }
.group.short { height: 62px; }
.fold { height: 40px; gap: 16px; margin-left: -8px; }
.slot-head { display: flex; align-items: center; gap: 8px; height: 20px; margin: 24px 0 8px; color: #262626; }
.slot-head.gap-above { margin-top: 28px; }
.slot-head b { font-weight: 600; }
.slot-head sup { font-size: inherit; line-height: 0; vertical-align: baseline; color: #da1e28; }
.slot-head small { margin-left: auto; font-size: 12px; }
.slot { display: flex; align-items: center; gap: 8px; height: 40px; padding: 0 16px 0 8px; background: #f3f3f3; }
.slot button { margin-left: auto; }
.drop { width: 100%; height: 42px; margin-top: 8px; border: 1px dashed #8d8d8d; color: #a8a8a8; font-size: 12px; }
.chat { position: absolute; right: 17px; bottom: 9px; width: 46px; height: 46px; border-radius: 50%; background: #0f62fe; }

/* Desktop taskbar */
.taskbar { flex: none; display: flex; align-items: stretch; height: 40px; background: #1c2b30; color: #fff; font: 12px/18px "Open Sans", "Noto Sans", sans-serif; }
.start { width: 48px; }
.task-search { display: flex; align-items: center; gap: 11px; width: 344px; padding: 0 12px; background: #333; border: 1px solid #5a5a5a; font-size: 14px; }
.task-search input::placeholder { color: #d0d0d0; }
.sys { width: 48px; }
.apps { display: grid; flex: none; grid-template-columns: repeat(11, minmax(0, 1fr)); width: 498px; margin-left: 2px; }
.apps button { position: relative; }
.run::after { content: ""; position: absolute; left: 4px; right: 4px; bottom: 0; height: 2px; background: #e590f5; }
.front { background: #4d585c; }
.front::after { left: 0; right: 0; }
.badge { position: absolute; left: 26px; bottom: 4px; width: 17px; height: 17px; border: 1px solid #999; border-radius: 50%; background: #26343a; font-size: 11px; line-height: 15px; text-align: center; }
.badge.rosy { border-color: #ec407a; background: #ec407a; left: 22px; }
.tray { display: flex; align-items: center; gap: 8px; margin-left: auto; padding-right: 4px; }
.temp { font-size: 14px; margin-right: 6px; }
.lang { margin: 0 2px; }
.clock { width: 64px; text-align: center; }
.notice { position: relative; width: 44px; height: 40px; padding-right: 12px; border-right: 1px solid #59656a; }
.notice .badge { left: 18px; bottom: 3px; }
```
